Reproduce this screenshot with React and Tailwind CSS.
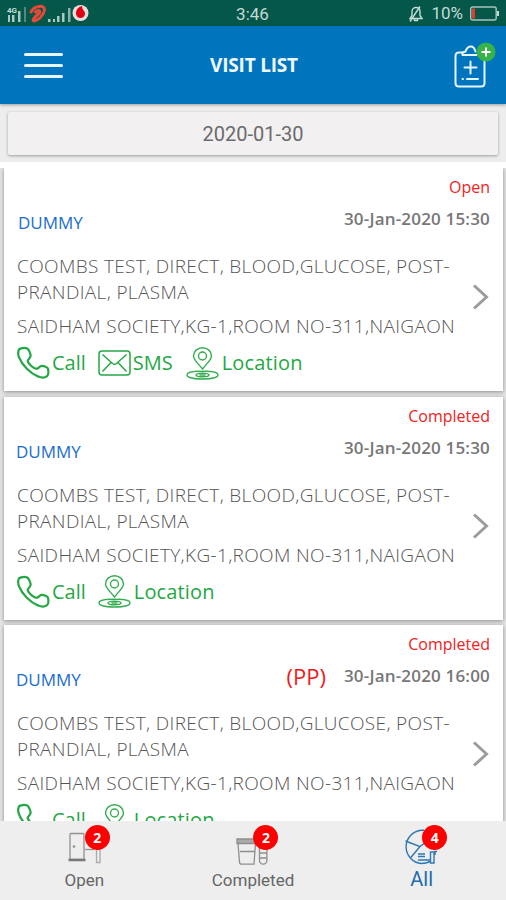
const visits = [
  { id: 1, name: 'DUMMY', status: 'Open', date: '30-Jan-2020 15:30', sms: true, pp: false },
  { id: 2, name: 'DUMMY', status: 'Completed', date: '30-Jan-2020 15:30', sms: false, pp: false },
  { id: 3, name: 'DUMMY', status: 'Completed', date: '30-Jan-2020 16:00', sms: false, pp: true },
]

function StatusBar() {
  return (
    <div className="grid h-[26px] shrink-0 grid-cols-3 items-center bg-[#045749] pl-[6px] pr-[7px] font-['Roboto',sans-serif] text-[#c5dad5]">
      <svg width="84" height="20" viewBox="0 0 84 20">
        <g fill="#a9c9c2">
          <rect x="2" y="12" width="2" height="7" />
          <rect x="6" y="12" width="2.5" height="7" />
          <rect x="12" y="8" width="2.5" height="11" />
          <rect x="18" y="4" width="2" height="15" opacity=".45" />
          <rect x="42" y="16" width="2.5" height="3" />
          <rect x="47" y="16" width="2" height="3" />
          <rect x="51" y="13" width="2.5" height="6" />
          <rect x="56" y="10" width="2.5" height="9" />
          <rect x="62" y="5" width="2.5" height="14" opacity=".8" />
        </g>
        <text x="1" y="10" fontSize="8" fontWeight="bold" fill="#c5dad5">4G</text>
        <path d="M25 9 C28 3 39 1 38.500 7 C38 12 32 17.500 28 18 C25 17.500 30 13 33 10.500 C35 8 33 6 29.500 9" fill="none" stroke="#e64a38" strokeWidth="3" strokeLinecap="round" />
        <circle cx="74.500" cy="10" r="8" fill="#e8dedd" />
        <path d="M76 3 C72 4 70 7 70 10.500 A4.500 4.500 0 0 0 79 10.500 C79 8 76 7 76 3Z" fill="#e00012" />
      </svg>
      <span className="mt-[2px] justify-self-center text-[17px] leading-none">3:46</span>
      <div className="flex items-center justify-end gap-[7px]">
        <svg width="16" height="18" viewBox="0 0 16 18" fill="none" stroke="currentColor" strokeWidth="1.400">
          <path d="M2 14.500 H14 L12 11.500 V7.500 C12 4.500 10 3.500 8 3.500 C6 3.500 4 5 4 7.500 V11.500Z" />
          <path d="M6.500 14.500 V16.500 H9.500 V14.500 M2 17.500 L12 2.500" />
        </svg>
        <span className="text-[17px] leading-none">10%</span>
        <svg width="29" height="15" viewBox="0 0 29 15">
          <rect x=".7" y="1" width="25.500" height="13" rx="2" fill="none" stroke="#a9c3bc" strokeWidth="1.400" />
          <rect x="2" y="2.500" width="3" height="10" fill="#e53a2c" />
          <rect x="27" y="5" width="2" height="5" fill="#c5dad5" />
        </svg>
      </div>
    </div>
  )
}

function Header() {
  return (
    <header className="relative z-10 flex h-[78px] shrink-0 items-center justify-between bg-[#0075bd] pl-6 pr-[9px] shadow-[0_1px_3px_rgba(0,0,0,0.35)]">
      <button className="mt-[1px] flex w-[39px] flex-col gap-[8.500px]">
        <span className="h-[2.500px] rounded-full bg-[#e6f5ff]" />
        <span className="h-[2.500px] rounded-full bg-[#e6f5ff]" />
        <span className="h-[2.500px] rounded-full bg-[#e6f5ff]" />
      </button>
      <h1 className="-ml-2 font-['Open_Sans',sans-serif] text-[19px] font-bold tracking-[-0.2px] text-[#eef8ff]">VISIT LIST</h1>
      <svg className="mt-[2px]" width="44" height="50" viewBox="0 0 44 50" fill="none">
        <g stroke="#e6f5ff" strokeWidth="2" strokeLinecap="round" strokeLinejoin="round">
          <path d="M9 11.500 H6 Q2.500 11.500 2.500 15 V42 Q2.500 45.500 6 45.500 H28 Q31.500 45.500 31.500 42 V20" />
          <path d="M9.500 14 H24 M9.500 14 V11.500 L12.500 10.500 Q14 5.500 18 5.500 Q21 5.500 22.500 10.500" />
          <path d="M17.500 20.500 V32.500 M11.500 26.500 H23.500" />
          <path d="M9.500 38 h.5 M14 38 H25" />
        </g>
        <circle cx="33" cy="11" r="9.500" fill="#37b34a" />
        <path d="M33 6.500 V15.500 M28.500 11 H37.500" stroke="#fff" strokeWidth="2" />
      </svg>
    </header>
  )
}

function PhoneIcon() {
  return (
    <svg className="shrink-0" width="33" height="34" viewBox="0 0 34 34" fill="none" stroke="#24a744" strokeWidth="2.300" strokeLinejoin="round">
      <path d="M2 3 C3.500 1.500 8 1 10.500 2 C12.500 3.500 14 7.500 14 9.500 C14 12 11 13 11 15 C12 18 17 23 20 23 C22.500 23 23 20 25.500 20 C28 20 31.500 21.500 32 23 C32.500 26 32.500 29.500 31 30.500 C29 32 25.500 32.500 22 31 C14 28 5 19 2 11 C1 8 1 5 2 3Z" />
    </svg>
  )
}

function MailIcon() {
  return (
    <svg className="shrink-0" width="33" height="26" viewBox="0 0 33 26" fill="none" stroke="#24a744" strokeWidth="1.500">
      <rect x="1" y="1" width="31" height="24" rx="3" />
      <path d="M4.500 4.500 L14.500 13.500 Q16.500 15 18.500 13.500 L28.500 4.500 M4.500 21.500 L13 12.500 M28.500 21.500 L20 12.500" />
    </svg>
  )
}

function PinIcon() {
  return (
    <svg className="shrink-0" width="33" height="33" viewBox="0 0 33 33" fill="none" stroke="#35ac50" strokeWidth="1.400">
      <path d="M16.500 22 C12 16 7.500 13 7.500 9 A9 8.300 0 0 1 25.500 9 C25.500 13 21 16 16.500 22Z" />
      <circle cx="16.500" cy="9" r="4" />
      <path d="M12 24.300 C5 24.500 1 26 1 28 C1 30.500 8 32 16.500 32 S32 30.500 32 28 C32 26 28 24.500 21 24.300" />
      <path d="M12 24.300 H21" />
      <ellipse cx="16.500" cy="28" rx="6.500" ry="1.800" />
      <path d="M13.500 28 h6" />
    </svg>
  )
}

function VisitCard({ visit }) {
  return (
    <article className="flex h-[223px] shrink-0 flex-col bg-white px-[13px] shadow-[0_1px_4px_rgba(0,0,0,0.4)]">
      <p className="mt-[6px] text-right text-[16px] leading-[26px] text-[#f0221c]">{visit.status}</p>
      <div className="flex h-[38px] items-start justify-end">
        <span className={`mr-auto mt-[11px] text-[17px] leading-6 text-[#1a6ed0] ${visit.id === 1 ? 'ml-[1px]' : '-ml-[1px]'}`}>{visit.name}</span>
        {visit.pp && <span className="mr-[18px] mt-[7px] text-[22px] leading-6 text-[#ee1c1c]">(PP)</span>}
        <span className="mt-[7px] text-[17px] font-semibold leading-6 tracking-[0.18px] text-[#777]">{visit.date}</span>
      </div>
      <div className="mt-[15px] flex items-center justify-between">
        <div className="text-[19px] font-light leading-[26px] tracking-[0.35px] text-[#555]">
          <p>COOMBS TEST, DIRECT, BLOOD,GLUCOSE, POST-<br />PRANDIAL, PLASMA</p>
          <p className="mt-[8px] whitespace-nowrap">SAIDHAM SOCIETY,KG-1,ROOM NO-311,NAIGAON</p>
        </div>
        <svg className="mt-[2px] shrink-0" width="20" height="28" viewBox="0 0 20 28" fill="none" stroke="#9c9c9c" strokeWidth="3">
          <path d="M4 2.500 L16.500 14 L4 25.500" />
        </svg>
      </div>
      <div className="mt-[6px] flex h-[36px] items-center text-[20px] text-[#24a744]">
        <PhoneIcon />
        <span className="ml-[2px] mr-[12px]">Call</span>
        {visit.sms && (
          <>
            <MailIcon />
            <span className="ml-[2px] mr-[13px]">SMS</span>
          </>
        )}
        <PinIcon />
        <span className="ml-[3px] tracking-[0.15px]">Location</span>
      </div>
    </article>
  )
}

function DoorIcon() {
  return (
    <svg width="36" height="36" viewBox="0 0 36 36" fill="none" stroke="#929292" strokeWidth="1.300">
      <rect x="4" y="4.500" width="14" height="26" rx="1" />
      <path d="M2.500 31 H19.500" stroke="#777" strokeWidth="2.500" />
      <circle cx="8" cy="17.500" r=".7" />
      <path d="M19 20.500 H28" />
      <path d="M30.500 20 V33.500 H34 V20" stroke="#aaa" />
    </svg>
  )
}

function BoxIcon() {
  return (
    <svg width="36" height="36" viewBox="0 0 36 36" fill="none" stroke="#8e8e8e" strokeWidth="1.300">
      <path d="M2 10 H21 V14.500 H2Z" fill="#aaa" />
      <path d="M3 14.500 L4.500 33 Q4.500 35.200 7 35.200 H19 L20.500 14.500 M5 22.500 H19.500" />
      <path d="M23.500 19 H32.500 M24.500 19 V31.500 A3.700 3.700 0 0 0 31.900 31.500 V19 M24.500 24 H32 M24.500 29 H32" />
    </svg>
  )
}

function ChartIcon() {
  return (
    <svg width="36" height="36" viewBox="0 0 36 36" fill="none" stroke="#2d77b5" strokeWidth="1.400">
      <path d="M20 1.200 H17.500 A16.700 16.700 0 0 0 17.500 34.500 Q22 34.500 26 32.500 M1.500 12 L16 17.500 L6 29.500 M16 17.500 L21 14" />
      <path d="M14 25 H21 M14 27.500 H21 M14 31 H26 M26.500 34 V23 H30 V34 Z M31 26 V22.500 H33" />
    </svg>
  )
}

const tabs = [
  { label: 'Open', count: 2, icon: DoorIcon, active: false },
  { label: 'Completed', count: 2, icon: BoxIcon, active: false },
  { label: 'All', count: 4, icon: ChartIcon, active: true },
]

function TabBar() {
  return (
    <nav className="relative z-10 grid h-[79px] shrink-0 grid-cols-3 bg-[#eee] font-['Roboto',sans-serif]">
      {tabs.map(({ label, count, icon: Icon, active }) => (
        <div key={label} className="flex flex-col items-center pt-[8px]">
          <div className="relative">
            <Icon />
            <span className="absolute -top-[4px] left-[18.500px] flex size-[25px] items-center justify-center rounded-full bg-[#fe0000] font-['Open_Sans',sans-serif] text-[14px] font-bold text-white">
              {count}
            </span>
          </div>
          <span className={active ? 'mt-[2px] text-[20px] leading-6 text-[#1d6cad]' : 'mt-[3px] text-[17px] leading-6 text-[#666]'}>{label}</span>
        </div>
      ))}
    </nav>
  )
}

export default function App() {
  return (
    <div className="flex h-[900px] w-[506px] flex-col overflow-hidden bg-[#eeedee] font-['Open_Sans',sans-serif]">
      <StatusBar />
      <Header />
      <div className="shrink-0 bg-[#eeedee] px-2 pb-[7px] pt-2">
        <button className="block h-[43px] w-full rounded-[2px] bg-[#f2f0f1] font-['Roboto',sans-serif] text-[20px] text-[#6b6b6b] shadow-[0_1px_3px_rgba(0,0,0,0.35)]">2020-01-30</button>
      </div>
      <main className="flex min-h-0 flex-1 flex-col gap-[5.500px] overflow-hidden border-t-[6px] border-white bg-[#e4e4e4] pl-1 pr-[3px]">
        {visits.map((visit) => (
          <VisitCard key={visit.id} visit={visit} />
        ))}
      </main>
      <TabBar />
    </div>
  )
}
